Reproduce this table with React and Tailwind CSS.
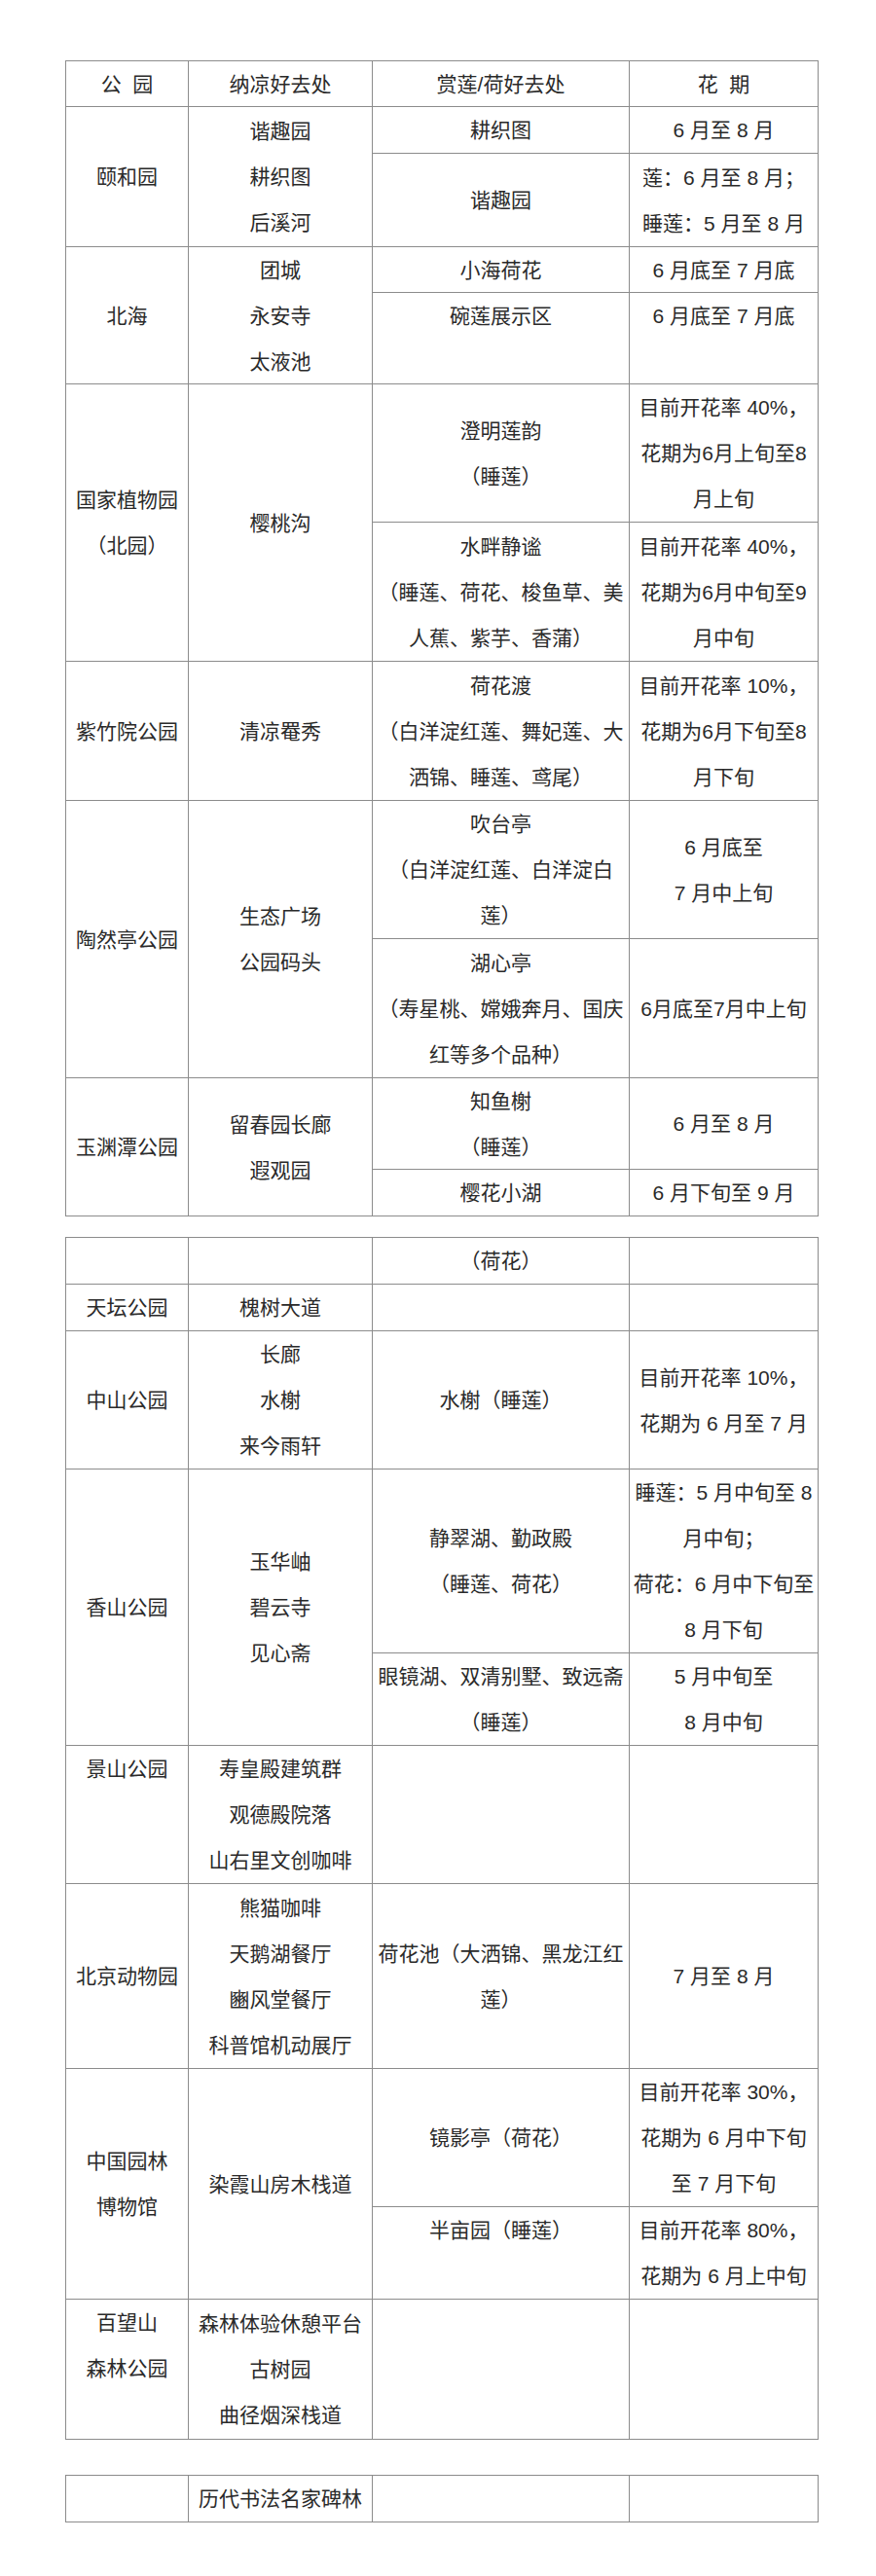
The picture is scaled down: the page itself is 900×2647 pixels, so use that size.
import React from "react";

function Cell({ w, top, lines = [] }) {
  return (
    <div
      className={`${w} h-full shrink-0 border-r border-b border-[#8c8c8c] flex flex-col items-center ${
        top ? "justify-start" : "justify-center"
      }`}
    >
      {lines.map((l, i) => (
        <div key={i} className="whitespace-pre leading-[47px]">
          {l}
        </div>
      ))}
    </div>
  );
}

function Row({ r }) {
  return (
    <div className={`flex ${r.h}`}>
      <Cell w="w-[126px]" top={r.top1} lines={r.c1} />
      <Cell w="w-[189px]" lines={r.c2} />
      {r.subs ? (
        <div className="flex flex-col">
          {r.subs.map((s, i) => (
            <div key={i} className={`flex ${s.h}`}>
              <Cell w="w-[264px]" top={s.top} lines={s.c3} />
              <Cell w="w-[194px]" top={s.top} lines={s.c4} />
            </div>
          ))}
        </div>
      ) : (
        <>
          <Cell w="w-[264px]" lines={r.c3} />
          <Cell w="w-[194px]" lines={r.c4} />
        </>
      )}
    </div>
  );
}

function Table({ rows, className = "" }) {
  return (
    <div className={`ml-[67px] w-[774px] border-l border-t border-[#8c8c8c] flex flex-col ${className}`}>
      {rows.map((r, i) => (
        <Row key={i} r={r} />
      ))}
    </div>
  );
}

const table1 = [
  { h: "h-[47px]", c1: ["公  园"], c2: ["纳凉好去处"], c3: ["赏莲/荷好去处"], c4: ["花  期"] },
  {
    h: "h-[144px]",
    c1: ["颐和园"],
    c2: ["谐趣园", "耕织图", "后溪河"],
    subs: [
      { h: "h-[48px]", c3: ["耕织图"], c4: ["6 月至 8 月"] },
      { h: "h-[96px]", c3: ["谐趣园"], c4: ["莲：6 月至 8 月；", "睡莲：5 月至 8 月"] },
    ],
  },
  {
    h: "h-[141px]",
    c1: ["北海"],
    c2: ["团城", "永安寺", "太液池"],
    subs: [
      { h: "h-[47px]", c3: ["小海荷花"], c4: ["6 月底至 7 月底"] },
      { h: "h-[94px]", top: true, c3: ["碗莲展示区"], c4: ["6 月底至 7 月底"] },
    ],
  },
  {
    h: "h-[285px]",
    c1: ["国家植物园", "（北园）"],
    c2: ["樱桃沟"],
    subs: [
      { h: "h-[142px]", c3: ["澄明莲韵", "（睡莲）"], c4: ["目前开花率 40%，", "花期为6月上旬至8", "月上旬"] },
      {
        h: "h-[143px]",
        c3: ["水畔静谧", "（睡莲、荷花、梭鱼草、美", "人蕉、紫芋、香蒲）"],
        c4: ["目前开花率 40%，", "花期为6月中旬至9", "月中旬"],
      },
    ],
  },
  {
    h: "h-[143px]",
    c1: ["紫竹院公园"],
    c2: ["清凉罨秀"],
    c3: ["荷花渡", "（白洋淀红莲、舞妃莲、大", "洒锦、睡莲、鸢尾）"],
    c4: ["目前开花率 10%，", "花期为6月下旬至8", "月下旬"],
  },
  {
    h: "h-[285px]",
    c1: ["陶然亭公园"],
    c2: ["生态广场", "公园码头"],
    subs: [
      { h: "h-[142px]", c3: ["吹台亭", "（白洋淀红莲、白洋淀白", "莲）"], c4: ["6 月底至", "7 月中上旬"] },
      { h: "h-[143px]", c3: ["湖心亭", "（寿星桃、嫦娥奔月、国庆", "红等多个品种）"], c4: ["6月底至7月中上旬"] },
    ],
  },
  {
    h: "h-[142px]",
    c1: ["玉渊潭公园"],
    c2: ["留春园长廊", "遐观园"],
    subs: [
      { h: "h-[94px]", c3: ["知鱼榭", "（睡莲）"], c4: ["6 月至 8 月"] },
      { h: "h-[48px]", c3: ["樱花小湖"], c4: ["6 月下旬至 9 月"] },
    ],
  },
];

const table2 = [
  { h: "h-[48px]", c1: [], c2: [], c3: ["（荷花）"], c4: [] },
  { h: "h-[48px]", c1: ["天坛公园"], c2: ["槐树大道"], c3: [], c4: [] },
  {
    h: "h-[142px]",
    c1: ["中山公园"],
    c2: ["长廊", "水榭", "来今雨轩"],
    c3: ["水榭（睡莲）"],
    c4: ["目前开花率 10%，", "花期为 6 月至 7 月"],
  },
  {
    h: "h-[284px]",
    c1: ["香山公园"],
    c2: ["玉华岫", "碧云寺", "见心斋"],
    subs: [
      {
        h: "h-[189px]",
        c3: ["静翠湖、勤政殿", "（睡莲、荷花）"],
        c4: ["睡莲：5 月中旬至 8", "月中旬；", "荷花：6 月中下旬至", "8 月下旬"],
      },
      { h: "h-[95px]", c3: ["眼镜湖、双清别墅、致远斋", "（睡莲）"], c4: ["5 月中旬至", "8 月中旬"] },
    ],
  },
  {
    h: "h-[142px]",
    top1: true,
    c1: ["景山公园"],
    c2: ["寿皇殿建筑群", "观德殿院落", "山右里文创咖啡"],
    c3: [],
    c4: [],
  },
  {
    h: "h-[190px]",
    c1: ["北京动物园"],
    c2: ["熊猫咖啡", "天鹅湖餐厅", "豳风堂餐厅", "科普馆机动展厅"],
    c3: ["荷花池（大洒锦、黑龙江红", "莲）"],
    c4: ["7 月至 8 月"],
  },
  {
    h: "h-[237px]",
    c1: ["中国园林", "博物馆"],
    c2: ["染霞山房木栈道"],
    subs: [
      { h: "h-[142px]", c3: ["镜影亭（荷花）"], c4: ["目前开花率 30%，", "花期为 6 月中下旬", "至 7 月下旬"] },
      { h: "h-[95px]", top: true, c3: ["半亩园（睡莲）"], c4: ["目前开花率 80%，", "花期为 6 月上中旬"] },
    ],
  },
  {
    h: "h-[144px]",
    top1: true,
    c1: ["百望山", "森林公园"],
    c2: ["森林体验休憩平台", "古树园", "曲径烟深栈道"],
    c3: [],
    c4: [],
  },
];

const table3 = [{ h: "h-[48px]", c1: [], c2: ["历代书法名家碑林"], c3: [], c4: [] }];

export default function App() {
  return (
    <div className="w-[900px] h-[2647px] bg-white pt-[62px] text-[21px] text-[#2a2a2a] font-['Liberation_Sans','Noto_Sans_CJK_SC',sans-serif]">
      <Table rows={table1} />
      <Table rows={table2} className="mt-[21px]" />
      <Table rows={table3} className="mt-[36px]" />
    </div>
  );
}
